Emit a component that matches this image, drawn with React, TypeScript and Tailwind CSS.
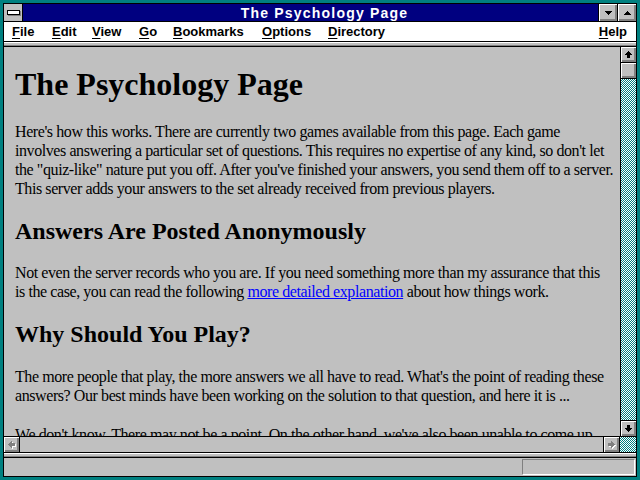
import React from 'react';

// pixel-art icon: each string is a row, '#' = ink
const Pix = ({ rows, color = '#000', shadow }: { rows: string[]; color?: string; shadow?: string }) => {
  const w = rows[0].length;
  const h = rows.length;
  const rects: React.ReactNode[] = [];
  const push = (fill: string, dx: number, key: string) =>
    rows.forEach((r, y) =>
      r.split('').forEach((c, x) => {
        if (c === '#') rects.push(<rect key={`${key}${x}-${y}`} x={x + dx} y={y + dx} width={1} height={1} fill={fill} />);
      })
    );
  if (shadow) push(shadow, 1, 's');
  push(color, 0, 'f');
  return (
    <svg width={w + (shadow ? 1 : 0)} height={h + (shadow ? 1 : 0)} shapeRendering="crispEdges">
      {rects}
    </svg>
  );
};

const UP = ['...#...', '..###..', '.#####.', '#######', '..###..', '..###..', '..###..'];
const DOWN = [...UP].reverse();
const LEFT = ['...#...', '..##...', '.######', '#######', '.######', '..##...', '...#...'];
const RIGHT = LEFT.map((r) => r.split('').reverse().join(''));
const TRI_DOWN = ['#######', '.#####.', '..###..', '...#...'];
const TRI_UP = [...TRI_DOWN].reverse();

const bevel = 'bg-[#c0c0c0] shadow-[inset_1px_1px_0_#ffffff,inset_-1px_-1px_0_#808080,inset_-2px_-2px_0_#808080]';
const checker = 'bg-[repeating-conic-gradient(#008080_0%_25%,#ffffff_0%_50%)] bg-[length:2px_2px]';

const menus: { label: string; w: string }[] = [
  { label: 'File', w: 'w-[40px]' },
  { label: 'Edit', w: 'w-[40px]' },
  { label: 'View', w: 'w-[47px]' },
  { label: 'Go', w: 'w-[34px]' },
  { label: 'Bookmarks', w: 'w-[89px]' },
  { label: 'Options', w: 'w-[66px]' },
  { label: 'Directory', w: 'w-[80px]' },
];

const Mnemonic = ({ label }: { label: string }) => (
  <span>
    <span className="underline underline-offset-2">{label[0]}</span>
    {label.slice(1)}
  </span>
);

export default function App() {
  return (
    <div className="w-[640px] h-[480px] bg-[#008080] p-[3px] font-['Liberation_Sans',sans-serif]">
      <div className="w-full h-full border border-black flex flex-col bg-[#c0c0c0]">
        {/* Title bar */}
        <div className="h-[18px] flex border-b border-black shrink-0">
          <div className="w-[19px] border-r border-black bg-[#c0c0c0] flex items-center justify-center">
            <div className="w-[13px] h-[5px] bg-white border border-black shadow-[1px_1px_0_#808080] -mt-[1px]" />
          </div>
          <div className="flex-1 bg-[#000080] text-white font-bold text-[14px] tracking-[1.2px] flex items-center justify-center pl-[28px] leading-none">
            The Psychology Page
          </div>
          <div className={`w-[19px] border-l border-black flex items-center justify-center ${bevel}`}>
            <Pix rows={TRI_DOWN} />
          </div>
          <div className={`w-[19px] border-l border-black flex items-center justify-center ${bevel}`}>
            <Pix rows={TRI_UP} />
          </div>
        </div>

        {/* Menu bar */}
        <div className="h-[20px] bg-white border-b border-black flex items-center pl-[8px] pr-[9px] text-[13px] font-bold text-black shrink-0">
          {menus.map((m) => (
            <div key={m.label} className={m.w}>
              <Mnemonic label={m.label} />
            </div>
          ))}
          <div className="ml-auto">
            <Mnemonic label="Help" />
          </div>
        </div>

        {/* collapsed toolbar strip */}
        <div className="h-[4px] border-t border-white border-b border-b-[#808080] bg-[#c0c0c0] shrink-0" />

        {/* Main */}
        <div className="flex-1 flex flex-col border-t border-black min-h-0">
          <div className="flex-1 flex min-h-0">
            <div className="flex-1 overflow-hidden bg-[#c0c0c0] pl-[11px] text-black font-['Liberation_Serif',serif] text-[16px] leading-[19px] tracking-[-0.42px] whitespace-nowrap">
              <h1 className="text-[32px] leading-[37px] font-bold tracking-normal mt-[19px]">The Psychology Page</h1>
              <p className="mt-[19px]">
                Here's how this works. There are currently two games available from this page. Each game
                <br />
                involves answering a particular set of questions. This requires no expertise of any kind, so don't let
                <br />
                the "quiz-like" nature put you off. After you've finished your answers, you send them off to a server.
                <br />
                This server adds your answers to the set already received from previous players.
              </p>
              <h2 className="text-[24px] leading-[28px] font-bold tracking-normal mt-[19px]">Answers Are Posted Anonymously</h2>
              <p className="mt-[18px]">
                Not even the server records who you are. If you need something more than my assurance that this
                <br />
                is the case, you can read the following{' '}
                <span className="text-[#0000ff] underline underline-offset-1">more detailed explanation</span> about how
                things work.
              </p>
              <h2 className="text-[24px] leading-[28px] font-bold tracking-normal mt-[19px]">Why Should You Play?</h2>
              <p className="mt-[19px]">
                The more people that play, the more answers we all have to read. What's the point of reading these
                <br />
                answers? Our best minds have been working on the solution to that question, and here it is ...
              </p>
              <p className="mt-[20px]">
                We don't know. There may not be a point. On the other hand, we've also been unable to come up
              </p>
            </div>

            {/* vertical scrollbar */}
            <div className="w-[16px] border-l border-black flex flex-col">
              <div className={`h-[16px] border-b border-black flex items-center justify-center ${bevel}`}>
                <Pix rows={UP} />
              </div>
              <div className={`h-[16px] border-b border-black ${bevel}`} />
              <div className={`flex-1 ${checker}`} />
              <div className={`h-[16px] border-t border-black flex items-center justify-center ${bevel}`}>
                <Pix rows={DOWN} />
              </div>
            </div>
          </div>

          {/* horizontal scrollbar */}
          <div className="h-[17px] border-t border-b border-black flex shrink-0">
            <div className={`w-[16px] border-r border-black flex items-center justify-center ${bevel}`}>
              <Pix rows={LEFT} color="#808080" shadow="#ffffff" />
            </div>
            <div className="flex-1 bg-[#c0c0c0]" />
            <div className={`w-[16px] border-l border-black flex items-center justify-center ${bevel}`}>
              <Pix rows={RIGHT} color="#808080" shadow="#ffffff" />
            </div>
            <div className={`w-[17px] border-l border-black ${checker}`} />
          </div>
        </div>

        {/* status strip */}
        <div className="h-[5px] border-t border-white border-b border-b-black bg-[#c0c0c0] shadow-[inset_0_-1px_0_#808080] shrink-0" />
        <div className="h-[18px] flex items-center justify-end pr-[1px] shrink-0">
          <div className="w-[113px] h-[16px] border-t border-l border-[#808080] border-b border-r border-b-white border-r-white" />
        </div>
      </div>
    </div>
  );
}
